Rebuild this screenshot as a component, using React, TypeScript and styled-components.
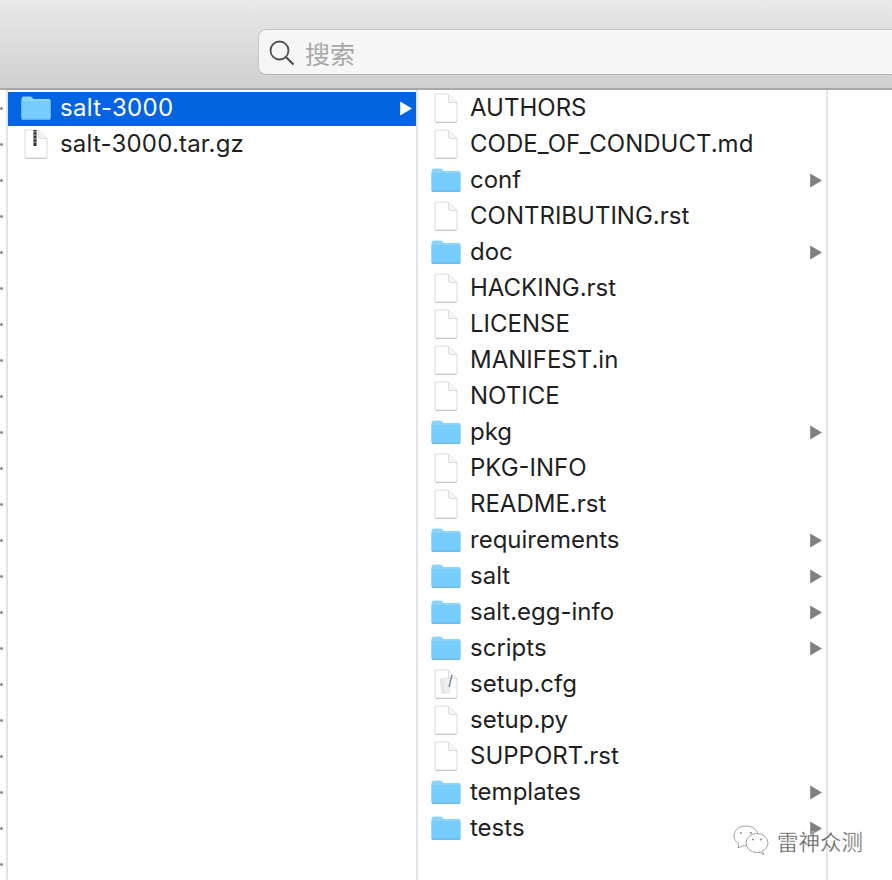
import React from "react";
import styled, { createGlobalStyle } from "styled-components";

const GlobalStyle = createGlobalStyle`
    html, body {
        margin: 0;
        padding: 0;
        background: #fff;
    }
    body {
        font-family: Inter, "Liberation Sans", "Noto Sans CJK SC", sans-serif;
    }
`;

type Kind = "folder" | "file" | "zip" | "config";

const secondColumn: { name: string; kind: Kind }[] = [
    { name: "AUTHORS", kind: "file" },
    { name: "CODE_OF_CONDUCT.md", kind: "file" },
    { name: "conf", kind: "folder" },
    { name: "CONTRIBUTING.rst", kind: "file" },
    { name: "doc", kind: "folder" },
    { name: "HACKING.rst", kind: "file" },
    { name: "LICENSE", kind: "file" },
    { name: "MANIFEST.in", kind: "file" },
    { name: "NOTICE", kind: "file" },
    { name: "pkg", kind: "folder" },
    { name: "PKG-INFO", kind: "file" },
    { name: "README.rst", kind: "file" },
    { name: "requirements", kind: "folder" },
    { name: "salt", kind: "folder" },
    { name: "salt.egg-info", kind: "folder" },
    { name: "scripts", kind: "folder" },
    { name: "setup.cfg", kind: "config" },
    { name: "setup.py", kind: "file" },
    { name: "SUPPORT.rst", kind: "file" },
    { name: "templates", kind: "folder" },
    { name: "tests", kind: "folder" },
];

const FolderIcon = () => (
    <svg width="30" height="24" viewBox="0 0 30 24">
        <path d="M0.500 3 Q0.500 0.500 2.500 0.500 L9 0.500 Q10.500 0.500 11.500 1.800 L12.500 3 L28 3 Q29.500 3 29.500 5 L29.500 22 Q29.500 23.500 28 23.500 L2 23.500 Q0.500 23.500 0.500 22 Z" fill="#8fd3f9" />
        <path d="M0.500 5 L29.500 5 L29.500 22 Q29.500 23.500 28 23.500 L2 23.500 Q0.500 23.500 0.500 22 Z" fill="#77cefc" />
        <path d="M1 23.200 L29 23.200" stroke="#5dade0" strokeWidth="1" />
    </svg>
);

const FileIcon = ({ kind }: { kind: Kind }) => (
    <svg width="24" height="30" viewBox="0 0 24 30">
        <path d="M1 1 L14.500 1 L23 9.500 L23 28 Q23 29.300 21.700 29.300 L2.300 29.300 Q1 29.300 1 28 Z" fill="#fff" stroke="#dadada" strokeWidth="1" />
        <path d="M1.500 29.400 L22.500 29.400" stroke="#c4c4c4" strokeWidth="1" />
        <path d="M14.500 1 L14.500 8 Q14.500 9.500 16 9.500 L23 9.500" fill="#f4f4f4" stroke="#dedede" strokeWidth="1" />
        {kind === "zip" && (
            <g>
                <path d="M11 1 L11 17" stroke="#2e2e2e" strokeWidth="3" />
                <path d="M11 2 L11 16" stroke="#eee" strokeWidth="1" strokeDasharray="1.500 2" />
            </g>
        )}
        {kind === "config" && (
            <g>
                <path d="M6 10 L17 9 L15 24 L8 24 Z" fill="#eef0ef" stroke="#dcdcdc" strokeWidth="0.800" />
                <path d="M18 6 L15 18" stroke="#7a8aa0" strokeWidth="1.400" />
                <path d="M8 11 L10 23" stroke="#ecd6d6" strokeWidth="1.200" />
            </g>
        )}
    </svg>
);

const Arrow = ({ $color }: { $color: string }) => (
    <svg width="12" height="15" viewBox="0 0 12 15">
        <path d="M0.500 1 L11.500 7.500 L0.500 14 Z" fill={$color} stroke={$color} strokeWidth="0.600" strokeLinejoin="round" />
    </svg>
);

const App = () => {
    return (
        <Page>
            <GlobalStyle />
            <Toolbar>
                <SearchBox>
                    <svg width="26" height="26" viewBox="0 0 26 26">
                        <circle cx="10.500" cy="10.500" r="9" fill="none" stroke="#505050" strokeWidth="1.800" />
                        <path d="M17 17 L24.500 24.500" stroke="#505050" strokeWidth="2.200" />
                    </svg>
                    <SearchHint>搜索</SearchHint>
                </SearchBox>
            </Toolbar>
            <Browser>
                <SliverColumn>
                    {Array.from({ length: 22 }).map((_, i) => (
                        <SliverRow key={i}>
                            <Dot />
                        </SliverRow>
                    ))}
                </SliverColumn>
                <Column>
                    <Row $selected>
                        <IconSlot><FolderIcon /></IconSlot>
                        <Name $tracking={0.3}>salt-3000</Name>
                        <ArrowSlot><Arrow $color="#fff" /></ArrowSlot>
                    </Row>
                    <Row>
                        <IconSlot><FileIcon kind="zip" /></IconSlot>
                        <Name $tracking={0.2}>salt-3000.tar.gz</Name>
                    </Row>
                </Column>
                <Column>
                    {secondColumn.map((item) => (
                        <Row key={item.name}>
                            <IconSlot>
                                {item.kind === "folder" ? <FolderIcon /> : <FileIcon kind={item.kind} />}
                            </IconSlot>
                            <Name>{item.name}</Name>
                            {item.kind === "folder" && (
                                <ArrowSlot><Arrow $color="#808080" /></ArrowSlot>
                            )}
                        </Row>
                    ))}
                </Column>
            </Browser>
            <Watermark>
                <svg width="36" height="32" viewBox="0 0 36 32">
                    <path d="M13 2 C6 2 1 6.500 1 12 C1 15 3 18 6 20 L5 24 L10 21.500 C11 21.800 12 22 13 22" fill="none" stroke="#8c8c8c" strokeWidth="0.800" />
                    <path d="M13 2 C19 2 24 5.500 25 10" fill="none" stroke="#8c8c8c" strokeWidth="0.800" />
                    <ellipse cx="24" cy="19" rx="11" ry="9.500" fill="#fff" stroke="#8c8c8c" strokeWidth="0.800" />
                    <path d="M29 27 L31 30.500 L26 28" fill="#fff" stroke="#8c8c8c" strokeWidth="0.800" />
                    <circle cx="8" cy="9" r="1" fill="#8c8c8c" />
                    <circle cx="18" cy="9" r="1" fill="#8c8c8c" />
                    <circle cx="20" cy="15.500" r="1" fill="#8c8c8c" />
                    <circle cx="28" cy="15.500" r="1" fill="#8c8c8c" />
                </svg>
                <WatermarkText>雷神众测</WatermarkText>
            </Watermark>
        </Page>
    );
};

export default App;

const Page = styled.div`
    position: relative;
    width: 892px;
    height: 880px;
    overflow: hidden;
    background: #fff;
`;

const Toolbar = styled.header`
    box-sizing: border-box;
    height: 90px;
    padding: 29px 0 0 258px;
    background: linear-gradient(#e9e9e9, #d0d0d0);
    border-bottom: 2px solid #a8a8a8;
`;

const SearchBox = styled.div`
    box-sizing: border-box;
    display: flex;
    align-items: center;
    gap: 10px;
    height: 46px;
    margin-right: -10px;
    padding: 1px 0 0 10px;
    background: #f6f6f6;
    border: 1px solid #c6c6c6;
    border-bottom-color: #b4b4b4;
    border-radius: 8px;
`;

const SearchHint = styled.span`
    font-size: 25px;
    color: #a8a8a8;
    font-family: "Noto Sans CJK SC", sans-serif;
`;

const Browser = styled.main`
    display: flex;
    align-items: stretch;
    height: 790px;
`;

const SliverColumn = styled.div`
    box-sizing: border-box;
    width: 8px;
    border-right: 2px solid #e4e4e4;
`;

const SliverRow = styled.div`
    display: flex;
    align-items: center;
    height: 36px;
`;

const Dot = styled.span`
    width: 3px;
    height: 3px;
    border-radius: 50%;
    background: #8a8a8a;
`;

const Column = styled.section`
    box-sizing: border-box;
    width: 410px;
    border-right: 2px solid #e4e4e4;
`;

const Row = styled.div<{ $selected?: boolean }>`
    box-sizing: border-box;
    display: flex;
    align-items: center;
    height: 36px;
    color: ${(p) => (p.$selected ? "#fff" : "#1f1f1f")};
    background: ${(p) => (p.$selected ? "linear-gradient(#fff 2px, #0264e1 2px)" : "transparent")};
`;

const IconSlot = styled.span`
    display: flex;
    align-items: center;
    justify-content: center;
    width: 32px;
    margin-left: 12px;
    flex: none;
`;

const Name = styled.span<{ $tracking?: number }>`
    margin-left: 8px;
    flex: 1;
    font-size: 24px;
    letter-spacing: ${(p) => p.$tracking ?? 0}px;
    line-height: 36px;
    white-space: nowrap;
`;

const ArrowSlot = styled.span`
    display: flex;
    align-items: center;
    margin-right: 4px;
`;

const Watermark = styled.div`
    position: absolute;
    left: 733px;
    top: 824px;
    display: flex;
    align-items: center;
    gap: 8px;
`;

const WatermarkText = styled.span`
    font-family: "Noto Sans CJK SC", sans-serif;
    font-size: 21.500px;
    color: #5c5c5c;
    -webkit-text-stroke: 0.3px #fff;
    text-shadow: 0 0 1px #fff;
`;
